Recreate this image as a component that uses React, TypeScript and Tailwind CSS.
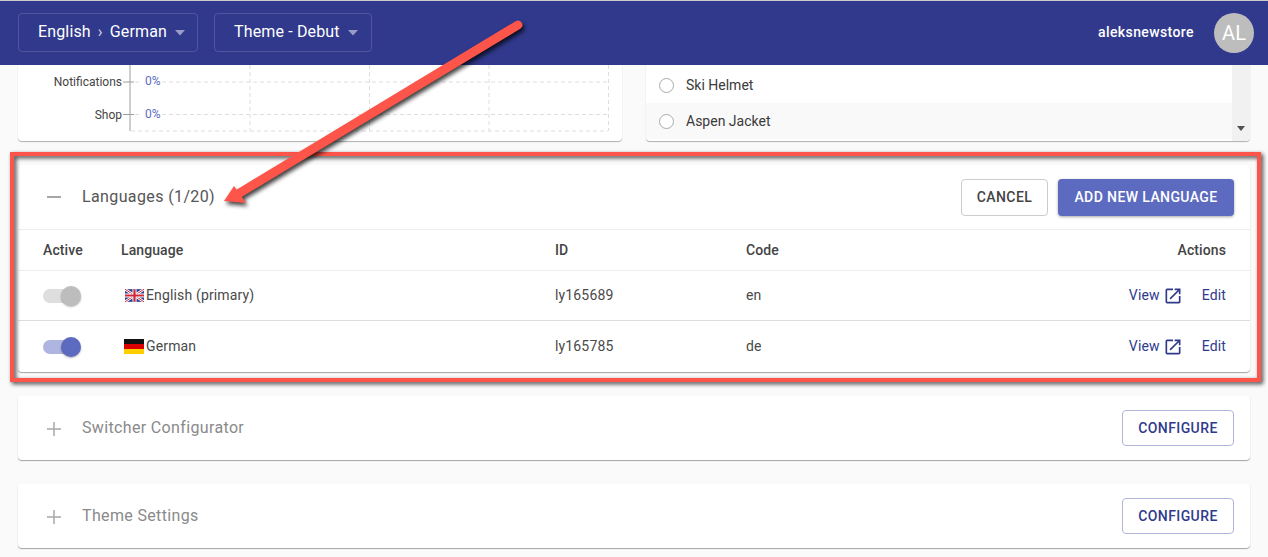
import { ReactNode } from 'react';
import { MdOpenInNew } from 'react-icons/md';

function Caret() {
  return (
    <svg width="12" height="6" viewBox="0 0 12 6" className="ml-[7px] mt-[2px]">
      <path d="M1 0h10L6 5.5z" fill="#ffffff" fillOpacity="0.5" />
    </svg>
  );
}

function NavSelect({ children, width }: { children: ReactNode; width: string }) {
  return (
    <div className={`${width} h-[39px] flex items-center pl-[19px] rounded border border-white/15 text-[16px] tracking-[0.15px] text-white`}>
      {children}
      <Caret />
    </div>
  );
}

function ChartCard() {
  return (
    <div className="h-[76px] bg-white rounded-b shadow-[0_1px_1px_rgba(0,0,0,0.3)] overflow-hidden">
      <svg width="604" height="76" viewBox="18 65 604 76" className="block">
        <path d="M130 65V131" stroke="#9e9e9e" strokeWidth="1" fill="none" />
        <path d="M123 82h7M123 114.500h7M130 82h4M130 114.500h4" stroke="#9e9e9e" strokeWidth="1" fill="none" />
        <path
          d="M135 82h5M135 114.500h5M162 82H608M162 114.500H608M131 131H608M250 65v66M369.500 65v66M489 65v66M608.500 65v66"
          stroke="#dedede"
          strokeDasharray="4 3"
          fill="none"
        />
        <text x="122" y="86" textAnchor="end" fontSize="12" fill="#444" fontFamily="Roboto">Notifications</text>
        <text x="122" y="119" textAnchor="end" fontSize="12" fill="#444" fontFamily="Roboto">Shop</text>
        <text x="145" y="85" fontSize="12" fill="#5c6bc0" fontFamily="Roboto">0%</text>
        <text x="145" y="118" fontSize="12" fill="#5c6bc0" fontFamily="Roboto">0%</text>
      </svg>
    </div>
  );
}

function RadioRow({ label, shaded }: { label: string; shaded?: boolean }) {
  return (
    <div className={`h-[36px] flex items-center pl-[13px] gap-[12px] ${shaded ? 'bg-[#f9f9f9]' : 'bg-white'}`}>
      <span className="w-[15px] h-[15px] rounded-full border border-[#aaaaaa] bg-white" />
      <span className="text-[14px] text-[#3a3a3a]">{label}</span>
    </div>
  );
}

function ProductCard() {
  return (
    <div className="h-[76px] bg-white rounded-b shadow-[0_1px_1px_rgba(0,0,0,0.3)] overflow-hidden flex">
      <div className="flex-1 pt-[2px]">
        <RadioRow label="Ski Helmet" />
        <RadioRow label="Aspen Jacket" shaded />
      </div>
      <div className="w-[18px] bg-[#f1f1f1] flex flex-col justify-end items-center pb-[10px]">
        <svg width="8" height="5" viewBox="0 0 8 5">
          <path d="M0 0h8L4 5z" fill="#505050" />
        </svg>
      </div>
    </div>
  );
}

function Toggle({ on }: { on?: boolean }) {
  return (
    <div className="relative w-[38px] h-[20px] flex items-center">
      <div className={`w-[34px] h-[14px] rounded-full ${on ? 'bg-[#aeb5e0]' : 'bg-[#dedede]'}`} />
      <div
        className={`absolute right-0 top-0 w-[20px] h-[20px] rounded-full shadow-[0_1px_2px_rgba(0,0,0,0.3)] ${on ? 'bg-[#5c6bc0]' : 'bg-[#bdbdbd]'}`}
      />
    </div>
  );
}

function UkFlag() {
  return (
    <svg width="19" height="13" viewBox="0 0 60 40" className="ml-[4px] mr-[2px]">
      <rect width="60" height="40" fill="#2a3f8f" />
      <path d="M0 0L60 40M60 0L0 40" stroke="#ffffff" strokeWidth="8" />
      <path d="M0 0L60 40M60 0L0 40" stroke="#cf2a3c" strokeWidth="3" />
      <path d="M30 0V40M0 20H60" stroke="#ffffff" strokeWidth="13" />
      <path d="M30 0V40M0 20H60" stroke="#cf2a3c" strokeWidth="7" />
    </svg>
  );
}

function DeFlag() {
  return (
    <svg width="20" height="15" viewBox="0 0 3 3" preserveAspectRatio="none" className="ml-[3px] mr-[2px]">
      <rect width="3" height="1" fill="#111111" />
      <rect y="1" width="3" height="1" fill="#d90000" />
      <rect y="2" width="3" height="1" fill="#ffce00" />
    </svg>
  );
}

const rowGrid = 'grid grid-cols-[78px_434px_191px_auto_1fr] items-center pl-[25px] pr-[24px]';

function LanguageRow({
  on,
  flag,
  name,
  id,
  code,
  last,
}: {
  on?: boolean;
  flag: ReactNode;
  name: string;
  id: string;
  code: string;
  last?: boolean;
}) {
  return (
    <div className={`${rowGrid} text-[14px] text-[#4a4a4a] tracking-[0.15px] ${last ? 'h-[51px]' : 'h-[50px] border-b border-[#dddddd]'}`}>
      <Toggle on={on} />
      <div className="flex items-center">
        {flag}
        {name}
      </div>
      <div>{id}</div>
      <div>{code}</div>
      <div className="flex items-center justify-end text-[#303a8c]">
        View
        <MdOpenInNew size={20} className="ml-[3px]" />
        <span className="ml-[19px]">Edit</span>
      </div>
    </div>
  );
}

function CollapsedCard({ title }: { title: string }) {
  return (
    <div className="h-[64px] bg-white rounded shadow-[0_1px_1px_rgba(0,0,0,0.35)] flex items-center pl-[28px] pr-[16px]">
      <svg width="16" height="16" viewBox="0 0 16 16" className="mt-[2px]">
        <path d="M8 1v14M1 8h14" stroke="#a8a8a8" strokeWidth="1.5" />
      </svg>
      <span className="ml-[20px] flex-1 text-[16px] tracking-[0.35px] text-[#8a8a8a]">{title}</span>
      <button className="w-[112px] h-[36px] rounded border border-[#b0b5dc] bg-white text-[14px] font-medium tracking-[0.4px] text-[#303a8c]">
        CONFIGURE
      </button>
    </div>
  );
}

export default function App() {
  return (
    <div className="relative w-[1268px] h-[557px] overflow-hidden bg-[#fafafa] font-['Roboto',sans-serif]">
      {/* Top bar */}
      <div className="border-t border-[#cccccc]">
        <header className="h-[64px] bg-[#30398c] flex items-center justify-between pl-[18px] pr-[14px]">
          <div className="flex items-center gap-[16px] -mt-[2px]">
            <NavSelect width="w-[180px]">
              English<span className="mx-[7px] text-white/80">›</span>German
            </NavSelect>
            <NavSelect width="w-[158px]">Theme - Debut</NavSelect>
          </div>
          <div className="flex items-center gap-[20px] -mt-[1px]">
            <span className="text-[14px] font-medium tracking-[0.4px] text-white">aleksnewstore</span>
            <div className="w-[40px] h-[40px] rounded-full bg-[#bdbdbd] flex items-center justify-center text-[20px] text-white">
              AL
            </div>
          </div>
        </header>
      </div>

      <main className="px-[18px] flex flex-col gap-[24px]">
        <div className="grid grid-cols-2 gap-[24px]">
          <ChartCard />
          <ProductCard />
        </div>

        {/* Languages */}
        <section className="bg-white rounded shadow-[0_1px_1px_rgba(0,0,0,0.35)]">
          <div className="h-[65px] flex items-center pl-[28px] pr-[16px] border-b border-[#eeeeee]">
            <svg width="16" height="16" viewBox="0 0 16 16">
              <path d="M1 8h14" stroke="#8a8a8a" strokeWidth="1.5" />
            </svg>
            <span className="ml-[20px] flex-1 text-[16px] tracking-[0.38px] text-[#555555]">Languages (1/20)</span>
            <button className="w-[87px] h-[37px] rounded border border-[#cccccc] bg-white text-[14px] font-medium tracking-[0.4px] text-[#444444]">
              CANCEL
            </button>
            <button className="ml-[10px] w-[176px] h-[37px] rounded bg-[#5c6bc0] text-[14px] font-medium tracking-[0.4px] text-white shadow-[0_1px_3px_rgba(0,0,0,0.35)]">
              ADD NEW LANGUAGE
            </button>
          </div>
          <div className={`${rowGrid} h-[41px] text-[14px] font-medium tracking-[0.1px] text-[#444444] border-b border-[#eeeeee]`}>
            <div>Active</div>
            <div>Language</div>
            <div>ID</div>
            <div>Code</div>
            <div className="text-right">Actions</div>
          </div>
          <LanguageRow flag={<UkFlag />} name="English (primary)" id="ly165689" code="en" />
          <LanguageRow on flag={<DeFlag />} name="German" id="ly165785" code="de" last />
        </section>

        <CollapsedCard title="Switcher Configurator" />
        <CollapsedCard title="Theme Settings" />
      </main>

      {/* Annotation over the page */}
      <div className="absolute left-[10px] top-[152px] w-[1251px] h-[230px] border-[4px] border-[#fd5549] drop-shadow-[2px_2px_2px_rgba(0,0,0,0.75)]" />
      <svg
        width="1268"
        height="557"
        viewBox="0 0 1268 557"
        className="absolute inset-0 pointer-events-none drop-shadow-[2px_3px_2px_rgba(0,0,0,0.75)]"
      >
        <path d="M518 25L238 194" stroke="#fd5549" strokeWidth="9" strokeLinecap="round" fill="none" />
        <path d="M224 201L234 186L246 203z" fill="#fd5549" />
      </svg>
    </div>
  );
}
